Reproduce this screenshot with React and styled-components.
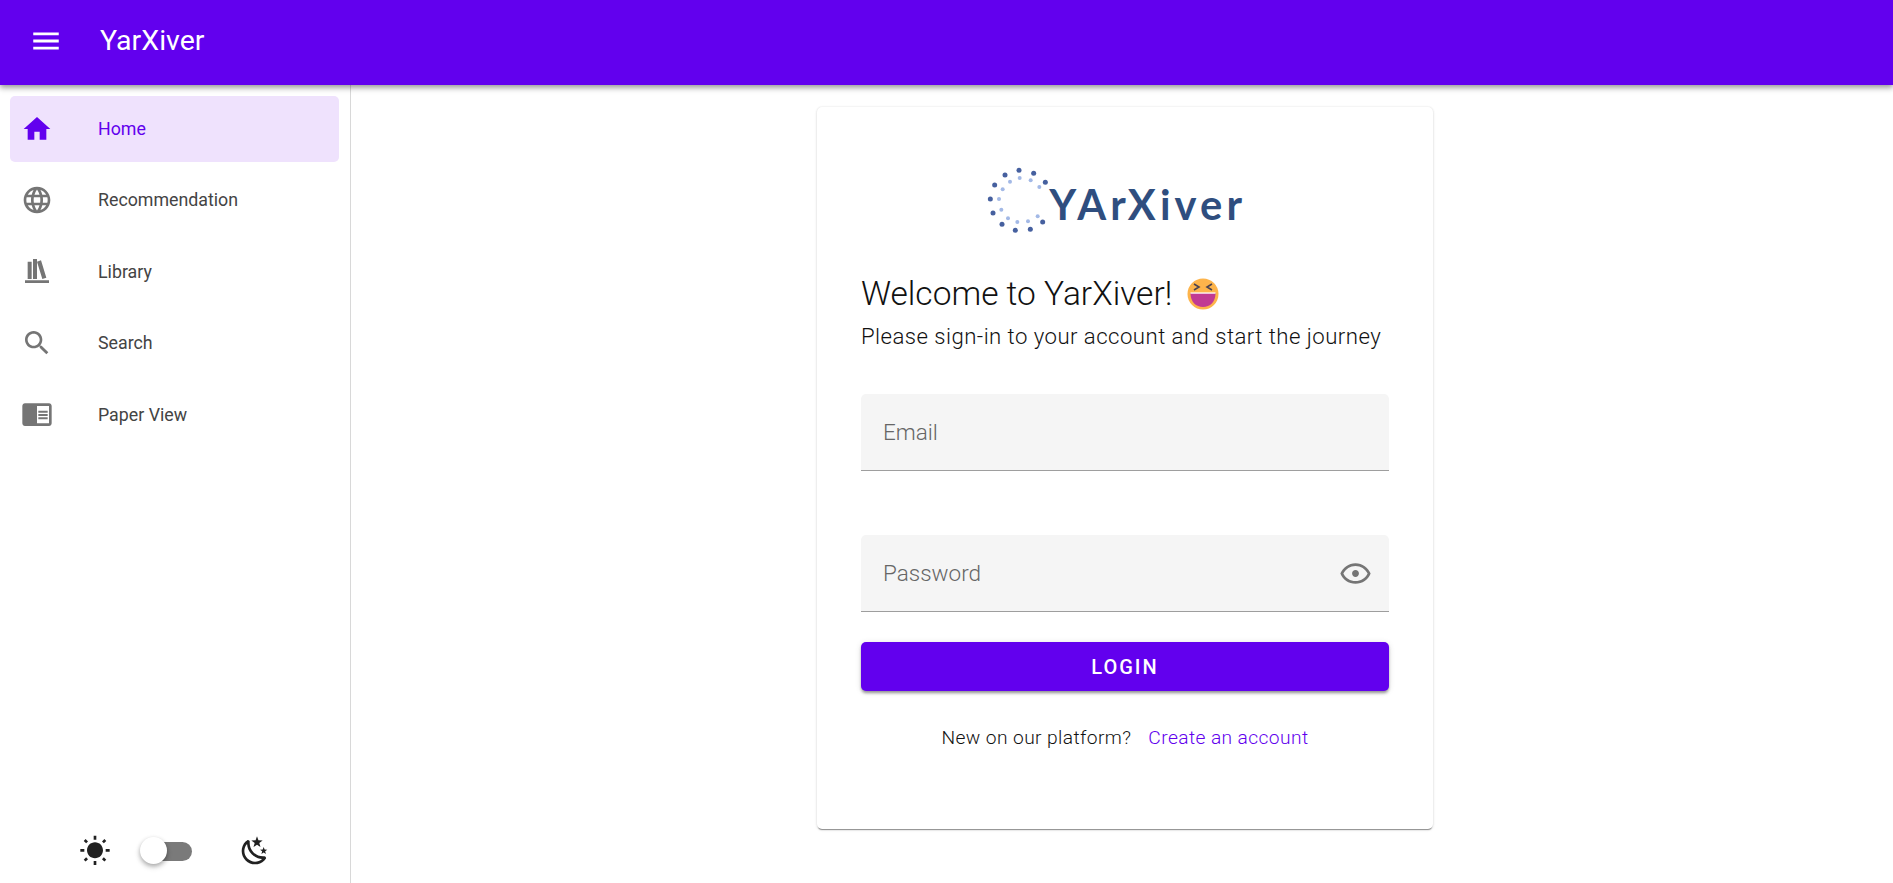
import React from 'react';
import styled, { createGlobalStyle } from 'styled-components';

const GlobalStyle = createGlobalStyle`
    html, body, #root {
        margin: 0;
        height: 100%;
    }
    body {
        font-family: Roboto, "Liberation Sans", sans-serif;
        background: #fff;
        overflow: hidden;
    }
`;

const Page = styled.div`
    display: flex;
    flex-direction: column;
    height: 883px;
`;
const AppBar = styled.header`
    position: relative;
    z-index: 2;
    flex: 0 0 85px;
    box-sizing: border-box;
    display: flex;
    align-items: center;
    padding: 0 0 4px 29px;
    background: #6200ee;
    color: #fff;
    box-shadow: 0 2px 5px rgba(0,0,0,0.3), 0 4px 6px rgba(0,0,0,0.14);
`;
const AppTitle = styled.div`
    margin-left: 37px;
    font-size: 28.5px;
    font-weight: 400;
`;
const Body = styled.div`
    flex: 1;
    display: flex;
    min-height: 0;
`;
const Sidebar = styled.nav`
    flex: 0 0 351px;
    box-sizing: border-box;
    display: flex;
    flex-direction: column;
    padding: 11px 11px 0 10px;
    border-right: 1px solid #d8d8d8;
`;
const NavItem = styled.div`
    flex: 0 0 66px;
    display: flex;
    align-items: center;
    padding: 0 0 1px 22px;
    box-sizing: border-box;
    margin-bottom: 5.4px;
    border-radius: 5px;
    background: ${(props) => (props.$active ? '#efe2fd' : 'transparent')};
    color: ${(props) => (props.$active ? '#6200ee' : '#444')};
    font-size: 17.8px;
`;
const NavIcon = styled.svg`
    flex: 0 0 32px;
    width: 32px;
    height: 32px;
    margin-left: -11px;
    margin-right: 45px;
    fill: ${(props) => (props.$active ? '#6200ee' : '#757575')};
`;
const ThemeRow = styled.div`
    margin-top: auto;
    display: flex;
    align-items: center;
    height: 62px;
    padding-left: 69px;
    padding-bottom: 2px;
    box-sizing: border-box;
`;
const ThemeIcon = styled.svg`
    width: 32px;
    height: 32px;
    fill: #212121;
    flex: none;
`;
const SwitchTrack = styled.div`
    position: relative;
    width: 49px;
    height: 19px;
    margin: 0 47px 0 32px;
    flex: none;
    border-radius: 10px;
    background: #7a7a7a;
`;
const SwitchThumb = styled.div`
    position: absolute;
    left: -3px;
    top: -5px;
    width: 27px;
    height: 27px;
    border-radius: 50%;
    background: #fff;
    box-shadow: 0 2px 4px rgba(0,0,0,0.25), 0 3px 6px rgba(0,0,0,0.14);
`;
const Main = styled.main`
    flex: 1;
    display: flex;
    justify-content: center;
    align-items: flex-start;
    padding-top: 22px;
    padding-left: 6px;
`;
const Card = styled.section`
    box-sizing: border-box;
    width: 616px;
    height: 722px;
    padding: 43px 44px 0;
    border-radius: 5px;
    background: #fff;
    box-shadow: 0 2px 1px -1px rgba(0,0,0,0.38), 0 1px 3px rgba(0,0,0,0.12), 0 0 2px rgba(0,0,0,0.1);
`;
const LogoBox = styled.div`
    display: flex;
    margin-left: 99px;
    height: 100px;
`;
const LogoName = styled.text`
    font-family: Lato, sans-serif;
    font-weight: 700;
    font-size: 125px;
    fill: #2f4e7f;
`;
const Heading = styled.h1`
    display: flex;
    align-items: center;
    margin: 22px 0 0;
    font-size: 33.5px;
    font-weight: 300;
    line-height: 44px;
    color: #111;
`;
const Emoji = styled.svg`
    width: 36px;
    height: 36px;
    margin-left: 13px;
`;
const SubHeading = styled.p`
    margin: 4px 0 0;
    font-size: 22.2px;
    font-weight: 300;
    line-height: 32px;
    letter-spacing: 0.45px;
    color: #111;
`;
const Field = styled.div`
    display: flex;
    align-items: center;
    justify-content: space-between;
    box-sizing: border-box;
    height: 77px;
    margin-top: ${(props) => props.$top}px;
    padding: 0 17px 0 22px;
    border-radius: 5px 5px 0 0;
    border-bottom: 1.5px solid #9e9e9e;
    background: #f5f5f5;
    color: #666;
    font-size: 22.5px;
    font-weight: 300;
`;
const EyeIcon = styled.svg`
    width: 33px;
    height: 33px;
    fill: #757575;
`;
const LoginButton = styled.button`
    display: block;
    width: 100%;
    height: 49px;
    margin-top: 30px;
    border: 0;
    border-radius: 5px;
    background: #6200ee;
    color: #fff;
    font-family: inherit;
    font-size: 20px;
    font-weight: 500;
    letter-spacing: 2px;
    box-shadow: 0 3px 3px -1px rgba(0,0,0,0.25), 0 2px 3px rgba(0,0,0,0.16), 0 1px 6px rgba(0,0,0,0.12);
`;
const SignupRow = styled.div`
    display: flex;
    justify-content: center;
    gap: 17px;
    margin-top: 35px;
    font-size: 19.2px;
    font-weight: 300;
    letter-spacing: 0.4px;
    color: #111;
`;
const SignupLink = styled.a`
    color: #6200ee;
`;

const icons = {
    home: 'M10 20v-6h4v6h5v-8h3L12 3 2 12h3v8z',
    globe: 'M11.99 2C6.47 2 2 6.48 2 12s4.47 10 9.99 10C17.52 22 22 17.52 22 12S17.52 2 11.99 2zm6.93 6h-2.95c-.32-1.25-.78-2.45-1.38-3.56 1.84.63 3.37 1.91 4.33 3.56zM12 4.04c.83 1.2 1.48 2.53 1.91 3.96h-3.82c.43-1.43 1.08-2.76 1.91-3.96zM4.26 14C4.1 13.36 4 12.69 4 12s.1-1.36.26-2h3.38c-.08.66-.14 1.32-.14 2 0 .68.06 1.34.14 2H4.26zm.82 2h2.95c.32 1.25.78 2.45 1.38 3.56-1.84-.63-3.37-1.9-4.33-3.56zm2.95-8H5.08c.96-1.66 2.49-2.93 4.33-3.56C8.81 5.55 8.35 6.75 8.03 8zM12 19.96c-.83-1.2-1.48-2.53-1.91-3.96h3.82c-.43 1.43-1.08 2.76-1.91 3.96zM14.34 14H9.66c-.09-.66-.16-1.32-.16-2 0-.68.07-1.35.16-2h4.68c.09.65.16 1.32.16 2 0 .68-.07 1.34-.16 2zm.25 5.56c.6-1.11 1.06-2.31 1.38-3.56h2.95c-.96 1.65-2.49 2.93-4.33 3.56zM16.36 14c.08-.66.14-1.32.14-2 0-.68-.06-1.34-.14-2h3.38c.16.64.26 1.31.26 2s-.1 1.36-.26 2h-3.38z',
    library: 'M9 3V18H12V3H9M12 5L16 18L19 17L15 4L12 5M5 5V18H8V5H5M3 19V21H21V19H3Z',
    search: 'M15.5 14h-.79l-.28-.27C15.41 12.59 16 11.11 16 9.5 16 5.91 13.09 3 9.5 3S3 5.91 3 9.5 5.91 16 9.5 16c1.61 0 3.09-.59 4.23-1.57l.27.28v.79l5 4.99L20.49 19l-4.99-5zm-6 0C7.01 14 5 11.99 5 9.5S7.01 5 9.5 5 14 7.01 14 9.5 11.99 14 9.5 14z',
    paper: 'M13 12h7v1.5h-7zm0-2.5h7V11h-7zm0 5h7V16h-7zM21 4H3c-1.1 0-2 .9-2 2v13c0 1.1.9 2 2 2h18c1.1 0 2-.9 2-2V6c0-1.1-.9-2-2-2zm0 15h-9V6h9v13z',
};

const navItems = [
    { label: 'Home', icon: 'home', active: true },
    { label: 'Recommendation', icon: 'globe' },
    { label: 'Library', icon: 'library' },
    { label: 'Search', icon: 'search' },
    { label: 'Paper View', icon: 'paper' },
];

const outerDots = [[177, 61], [221, 70], [256, 97], [135, 75], [104, 105], [91, 147], [99, 189], [126, 223], [166, 241], [211, 238], [248, 216]];
const innerDots = [[179, 84], [212, 91], [238, 111], [150, 95], [128, 118], [117, 147], [124, 179], [144, 205], [172, 216], [204, 214], [233, 199]];

const Logo = () => (
    <LogoBox>
        <svg width="300" height="100" viewBox="0 0 900 300">
            {outerDots.map(([x, y]) => <circle key={`${x}-${y}`} cx={x} cy={y} r="7.5" fill="#46609f" />)}
            {innerDots.map(([x, y]) => <circle key={`${x}-${y}`} cx={x} cy={y} r="6" fill="#a3b9e6" />)}
            <LogoName x="268" y="210" textLength="578" lengthAdjust="spacing">YArXiver</LogoName>
        </svg>
    </LogoBox>
);

const LaughEmoji = () => (
    <Emoji viewBox="0 0 36 36">
        <circle cx="18" cy="18" r="15.5" fill="#fdb44b" />
        <path d="M5.5 17h25c0 9-5.5 14-12.5 14S5.5 26 5.5 17z" fill="#c13a93" />
        <rect x="5.5" y="16.4" width="25" height="1.3" fill="#fff" />
        <path d="M9 8l5 3-5 3M27 8l-5 3 5 3" fill="none" stroke="#4c4350" strokeWidth="1.6" />
    </Emoji>
);

export default function App() {
    return (
        <Page>
            <GlobalStyle />
            <AppBar>
                <svg width="34" height="34" viewBox="0 0 24 24" fill="#fff">
                    <path d="M3 18h18v-2H3v2zm0-5h18v-2H3v2zm0-7v2h18V6H3z" />
                </svg>
                <AppTitle>YarXiver</AppTitle>
            </AppBar>
            <Body>
                <Sidebar>
                    {navItems.map((item) => (
                        <NavItem key={item.label} $active={item.active}>
                            <NavIcon viewBox="0 0 24 24" $active={item.active}>
                                <path d={icons[item.icon]} />
                            </NavIcon>
                            {item.label}
                        </NavItem>
                    ))}
                    <ThemeRow>
                        <ThemeIcon viewBox="0 0 24 24">
                            <path d="M6.76 4.84l-1.8-1.79-1.41 1.41 1.79 1.79 1.42-1.41zM4 10.5H1v2h3v-2zm9-9.95h-2V3.5h2V.55zm7.45 3.91l-1.41-1.41-1.79 1.79 1.41 1.41 1.79-1.79zm-3.21 13.7l1.79 1.8 1.41-1.41-1.8-1.79-1.4 1.4zM20 10.5v2h3v-2h-3zm-8-5c-3.31 0-6 2.69-6 6s2.69 6 6 6 6-2.69 6-6-2.69-6-6-6zm-1 16.95h2V19.5h-2v2.95zm-7.45-3.91l1.41 1.41 1.79-1.8-1.41-1.41-1.79 1.8z" />
                        </ThemeIcon>
                        <SwitchTrack>
                            <SwitchThumb />
                        </SwitchTrack>
                        <ThemeIcon viewBox="0 0 24 24">
                            <path d="M17.75,4.09L15.22,6.03L16.13,9.09L13.5,7.28L10.87,9.09L11.78,6.03L9.25,4.09L12.44,4L13.5,1L14.56,4L17.75,4.09M21.25,11L19.61,12.25L20.2,14.23L18.5,13.06L16.8,14.23L17.39,12.25L15.75,11L17.81,10.95L18.5,9L19.19,10.95L21.25,11M18.97,15.95C19.8,15.87 20.69,17.05 20.16,17.8C19.84,18.25 19.5,18.67 19.08,19.07C15.17,23 8.84,23 4.94,19.07C1.03,15.17 1.03,8.83 4.94,4.93C5.34,4.53 5.76,4.17 6.21,3.85C6.96,3.32 8.14,4.21 8.06,5.04C7.79,7.9 8.75,10.87 10.95,13.06C13.14,15.26 16.1,16.22 18.97,15.95M17.33,17.97C14.5,17.81 11.7,16.64 9.53,14.5C7.36,12.31 6.2,9.5 6.04,6.68C3.23,9.82 3.34,14.64 6.35,17.66C9.37,20.67 14.19,20.78 17.33,17.97Z" />
                        </ThemeIcon>
                    </ThemeRow>
                </Sidebar>
                <Main>
                    <Card>
                        <Logo />
                        <Heading>Welcome to YarXiver! <LaughEmoji /></Heading>
                        <SubHeading>Please sign-in to your account and start the journey</SubHeading>
                        <Field $top={42}>Email</Field>
                        <Field $top={64}>
                            Password
                            <EyeIcon viewBox="0 0 24 24">
                                <path d="M12 6.5c3.79 0 7.17 2.13 8.82 5.5-1.65 3.37-5.02 5.5-8.82 5.5S4.83 15.37 3.18 12C4.83 8.63 8.21 6.5 12 6.5m0-2C7 4.5 2.73 7.61 1 12c1.73 4.39 6 7.5 11 7.5s9.27-3.11 11-7.5c-1.73-4.39-6-7.5-11-7.5zm0 5c1.38 0 2.5 1.12 2.5 2.5s-1.12 2.5-2.5 2.5-2.5-1.12-2.5-2.5 1.12-2.5 2.5-2.5z" />
                            </EyeIcon>
                        </Field>
                        <LoginButton>LOGIN</LoginButton>
                        <SignupRow>
                            <span>New on our platform?</span>
                            <SignupLink>Create an account</SignupLink>
                        </SignupRow>
                    </Card>
                </Main>
            </Body>
        </Page>
    );
}
